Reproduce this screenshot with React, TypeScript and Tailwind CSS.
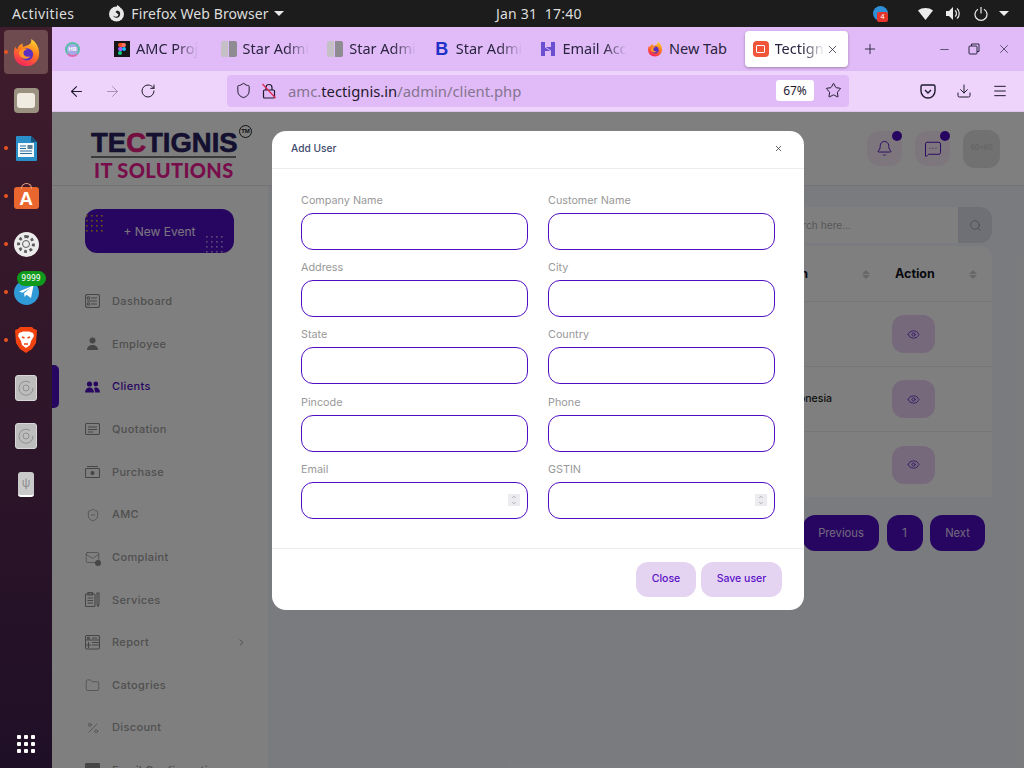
import React from 'react';
import {
  ArrowLeft, ArrowRight, RotateCw, Shield, Star, Download, Menu, Plus, X, Minus, Bell,
  MessageSquareMore, Eye, Search, ChevronRight, ChevronUp, ChevronDown, Folder, Percent, ShieldMinus,
  Mail,
} from 'lucide-react';

const FirefoxIcon = ({ size, id }: { size: number; id: string }) => (
  <svg width={size} height={size} viewBox="0 0 32 32">
    <defs>
      <linearGradient id={id} x1="0.7" y1="0" x2="0.3" y2="1">
        <stop offset="0" stopColor="#ffd22e" />
        <stop offset="0.45" stopColor="#ff7a1f" />
        <stop offset="1" stopColor="#f5215f" />
      </linearGradient>
    </defs>
    <path d="M16 31C7.7 31 2 24.6 2 17c0-3 .8-5.6 2-7.6.3 1.6 1 2.6 1.8 3.2C6.6 9 9 6.6 12 6c-.6 1.6-.3 2.8.4 3.6 2-.6 6-1.4 8-3.8.8-1.2 1-2.6.8-4.8 4 2.4 8.8 7.6 8.8 16C30 24.6 24.3 31 16 31z" fill={`url(#${id})`} />
    <circle cx="16.5" cy="18" r="6.8" fill="#5b2fc0" />
    <path d="M8 15c2-3.4 6.4-3.6 9-2.4-2.6.2-4.4 1.6-4.4 4 0 3.6 4.4 5.2 8 3.6-2 3-7 3.6-10 1.4C8 19.8 7.2 17 8 15z" fill="#ff9a2a" />
  </svg>
);

const DiscIcon = () => (
  <div className="w-[22px] h-[26px] rounded-[3px] bg-[#bdbdbd] border border-[#d8d8d8] flex items-center justify-center">
    <svg width="18" height="18" viewBox="0 0 18 18" fill="none" stroke="#8f8f8f" strokeWidth="1">
      <path d="M13 3.500a7 7 0 1 0 3 5.500" />
      <circle cx="9" cy="9" r="3" />
    </svg>
  </div>
);

const dockApps: { icon: React.ReactNode; running?: boolean; active?: boolean }[] = [
  { icon: <FirefoxIcon size={29} id="dock-fx" />, running: true, active: true },
  {
    icon: (
      <div className="w-[25px] h-[25px] rounded-[4px] bg-[#9a9180] flex items-center justify-center">
        <div className="w-[18px] h-[15px] rounded-[3px] bg-[#f1ece2]" />
      </div>
    ),
  },
  {
    running: true,
    icon: (
      <svg width="22" height="25" viewBox="0 0 22 25">
        <path d="M2 0h14l6 6v18a1 1 0 0 1-1 1H2a1 1 0 0 1-1-1V1a1 1 0 0 1 1-1z" fill="#2a8fc9" />
        <rect x="3" y="7" width="16" height="14" fill="#f3f8fb" />
        <path d="M5 10h6M5 12.500h6M5 15h12M5 17.500h12" stroke="#2a6f9c" strokeWidth="1" />
        <rect x="12.500" y="9" width="5" height="4" fill="#5a7f96" />
        <path d="M16 0l6 6h-6z" fill="#16527a" />
      </svg>
    ),
  },
  {
    running: true,
    icon: (
      <div className="relative w-[25px] h-[22px] mt-[4px] rounded-[3px] bg-[#e9662f] flex items-center justify-center text-white font-bold text-[19px] leading-none font-['Liberation_Sans',sans-serif]">
        <span className="absolute -top-[4px] left-[7px] w-[11px] h-[6px] rounded-t-full border border-b-0 border-[#e9a080]" />
        A
      </div>
    ),
  },
  {
    running: true,
    icon: (
      <div className="w-[25px] h-[25px] rounded-full bg-[#ececec] flex items-center justify-center">
        <div className="w-[18px] h-[18px] rounded-full border-[3px] border-dotted border-[#5c5c5c] flex items-center justify-center">
          <div className="w-[8px] h-[8px] rounded-full border border-[#5c5c5c]" />
        </div>
      </div>
    ),
  },
  {
    running: true,
    icon: (
      <div className="relative w-[25px] h-[25px] rounded-full bg-[#2f9ad6] flex items-center justify-center">
        <svg width="15" height="14" viewBox="0 0 15 14">
          <path d="M0 6.500 14.500.5 12 13 7.500 9.800 5.600 12l-.5-3.800 6.600-5.400L3.600 7.800z" fill="#fff" />
        </svg>
        <span className="absolute left-[3px] top-[-9px] w-[29px] h-[15px] rounded-full bg-[#0f9a1e] text-white text-[8px] leading-[15px] text-center font-['DejaVu_Sans_Mono',monospace]">
          9999
        </span>
      </div>
    ),
  },
  {
    running: true,
    icon: (
      <svg width="24" height="28" viewBox="0 0 24 28">
        <path d="M6 1h12l2 2 3 1-1 13-4 6-6 4-6-4-4-6L1 4l3-1z" fill="#f1420f" />
        <path d="M5 7l4-1.500h6L19 7l1 3-3 5-1 4-4 3-4-3-1-4-3-5z" fill="#fff" />
        <path d="M8 11l2.500 1M16 11l-2.500 1M10 18h4" stroke="#f1420f" strokeWidth="1.500" fill="none" />
      </svg>
    ),
  },
  { icon: <DiscIcon /> },
  { icon: <DiscIcon /> },
  {
    icon: (
      <div className="w-[16px] h-[25px] rounded-[3px] bg-[#c9c9c9] border-b-2 border-white flex items-center justify-center text-[#8a8a8a] text-[11px]">
        ψ
      </div>
    ),
  },
];

const Dock = () => (
  <div className="w-[52px] shrink-0 flex flex-col pt-px pb-[15px] bg-gradient-to-b from-[#401c2c] to-[#1f0f26]">
    {dockApps.map((app, i) => (
      <div key={i} className="relative h-[48px] flex items-center justify-center">
        {app.running && <span className="absolute left-[4px] top-[22px] w-[4px] h-[4px] rounded-full bg-[#e95420]" />}
        {app.active ? (
          <div className="w-[44px] h-[44px] rounded-[4px] bg-[#6d4b4f] flex items-center justify-center">{app.icon}</div>
        ) : (
          app.icon
        )}
      </div>
    ))}
    <div className="mt-auto mx-auto grid grid-cols-3 gap-x-[3px] gap-y-[3px] w-[18px]">
      {Array.from({ length: 9 }).map((_, i) => (
        <span key={i} className="w-[4px] h-[4px] rounded-[1px] bg-white" />
      ))}
    </div>
  </div>
);

const TopBar = () => (
  <div className="h-[27px] shrink-0 bg-[#1c1c1c] text-[#dedede] text-[14px] flex items-center font-['Noto_Sans',sans-serif] relative">
    <span className="ml-[12px] tracking-[0.4px]">Activities</span>
    <svg className="ml-[34px]" width="17" height="17" viewBox="0 0 17 17">
      <circle cx="8.500" cy="9" r="7.500" fill="#e8e8e8" />
      <path d="M5 8.500a3.600 3.600 0 1 0 4-3l-1.500 1.500 3 2.500a2.500 2.500 0 1 1-5.500-1z" fill="#1c1c1c" />
      <path d="M9 0c2 1 3 2 3.400 3.600L9 3z" fill="#e8e8e8" />
    </svg>
    <span className="ml-[6px] tracking-[0.1px]">Firefox Web Browser</span>
    <span className="ml-[5px] w-0 h-0 border-x-[5px] border-x-transparent border-t-[5px] border-t-[#e8e8e8]" />
    <span className="absolute left-[496px] tracking-[0.2px]">Jan 31&nbsp;&nbsp;17:40</span>
    <div className="ml-auto flex items-center pr-[15px]">
      <div className="relative w-[15px] h-[15px] rounded-full bg-[#2d8fd8]">
        <span className="absolute left-[4px] top-[6px] w-[11px] h-[10px] rounded-[2px] bg-[#e5352b] text-white text-[7px] leading-[10px] text-center">4</span>
      </div>
      <svg className="ml-[30px]" width="15" height="12" viewBox="0 0 15 12">
        <path d="M0 2.500C4-.8 11-.8 15 2.500L7.500 12z" fill="#ececec" />
      </svg>
      <svg className="ml-[13px]" width="14" height="13" viewBox="0 0 14 13" fill="#ececec">
        <path d="M0 4h3l4-4v13L3 9H0z" />
        <path d="M9 3.500c2 1.500 2 4.500 0 6M11 1.500c3 2.500 3 7.500 0 10" fill="none" stroke="#ececec" strokeWidth="1.200" />
      </svg>
      <svg className="ml-[14px]" width="14" height="14" viewBox="0 0 14 14" fill="none" stroke="#ececec" strokeWidth="1.200">
        <path d="M4 2.200a6 6 0 1 0 6 0M7 0v6.500" />
      </svg>
      <span className="ml-[11px] w-0 h-0 border-x-[5px] border-x-transparent border-t-[5px] border-t-[#ececec]" />
    </div>
  </div>
);

interface BrowserTab {
  title: string;
  icon: React.ReactNode;
  fade?: boolean;
}

const StarIcon = () => (
  <div className="w-[16px] h-[16px] flex gap-px">
    <span className="w-[7px] bg-[#c4c0c6] rounded-l-[2px]" />
    <span className="w-[8px] bg-[#8f8b92] rounded-r-[2px]" />
  </div>
);

const tabs: BrowserTab[] = [
  {
    title: 'AMC Proj',
    fade: true,
    icon: (
      <div className="w-[16px] h-[16px] bg-[#161616] flex flex-col items-center justify-center">
        <div className="grid grid-cols-2 w-[8px]">
          <span className="h-[4px] bg-[#f24e1e] rounded-l-full" />
          <span className="h-[4px] bg-[#ff7262] rounded-r-full" />
          <span className="h-[4px] bg-[#a259ff] rounded-l-full" />
          <span className="h-[4px] bg-[#1abcfe] rounded-full" />
          <span className="h-[4px] bg-[#0acf83] rounded-full" />
        </div>
      </div>
    ),
  },
  { title: 'Star Admi', fade: true, icon: <StarIcon /> },
  { title: 'Star Admi', fade: true, icon: <StarIcon /> },
  {
    title: 'Star Admi',
    fade: true,
    icon: <span className="w-[16px] text-center text-[#2030c8] text-[18px] font-bold leading-none font-['Liberation_Sans',sans-serif]">B</span>,
  },
  {
    title: 'Email Acc',
    fade: true,
    icon: (
      <svg width="16" height="16" viewBox="0 0 16 16" fill="#6a4fd0">
        <path d="M1 1h4v5h6V1h4v14h-4v-5H5v5H1z" />
        <path d="M5 6l6 4" stroke="#e1bbf7" strokeWidth="1" />
      </svg>
    ),
  },
  { title: 'New Tab', icon: <FirefoxIcon size={16} id="tab-fx" /> },
];

const TabBar = () => (
  <div className="h-[44px] shrink-0 bg-[#e1bbf7] flex items-center font-['Noto_Sans',sans-serif] text-[14.500px] text-[#2a2440]">
    <div className="w-[60px] flex pl-[13px] shrink-0">
      <div className="w-[15px] h-[15px] rounded-full border-[2px] border-[#58c0a8] border-b-[#e06ab0] text-[6px] font-bold leading-[11px] text-center text-white bg-[#a9a8e8]">
        HR
      </div>
    </div>
    {tabs.map((tab, i) => (
      <div key={i} className="w-[106.600px] shrink-0 flex items-center pl-[2px] gap-[6px]">
        <div className="w-[16px] h-[16px] shrink-0 flex items-center justify-center">{tab.icon}</div>
        <span className={`whitespace-nowrap ${tab.fade ? '[mask-image:linear-gradient(to_right,black_65%,transparent)]' : ''}`}>
          {tab.title}
        </span>
      </div>
    ))}
    <div className="w-[103px] h-[36px] -ml-[7px] shrink-0 bg-white rounded-[4px] shadow-[0_1px_3px_rgba(0,0,0,0.3)] flex items-center pl-[8px]">
      <div className="w-[16px] h-[16px] rounded-[4px] bg-[#f0553a] flex items-center justify-center">
        <div className="w-[9px] h-[8px] rounded-[1px] border border-white" />
      </div>
      <span className="ml-[6px] w-[50px] whitespace-nowrap [mask-image:linear-gradient(to_right,black_55%,transparent)]">Tectign</span>
      <X size={13} strokeWidth={1.4} className="ml-[1px]" />
    </div>
    <Plus size={16} strokeWidth={1.4} className="ml-[14px]" />
    <div className="ml-auto flex items-center pr-[13px] gap-[17px]">
      <Minus size={13} strokeWidth={1.3} />
      <svg width="12" height="12" viewBox="0 0 12 12" fill="none" stroke="#2a2440" strokeWidth="1">
        <rect x="1" y="3" width="8" height="8" rx="1" />
        <path d="M3.500 3V1h7.500v7.500H9" />
      </svg>
      <X size={14} strokeWidth={1.2} />
    </div>
  </div>
);

const NavBar = () => (
  <div className="h-[41px] shrink-0 bg-[#eed4fb] border-b border-[#dcc4ea] flex items-center text-[#1f1a2e] font-['Noto_Sans',sans-serif]">
    <ArrowLeft size={17} strokeWidth={1.5} className="ml-[16px]" />
    <ArrowRight size={17} strokeWidth={1.3} className="ml-[19px] text-[#9d8bac]" />
    <RotateCw size={16} strokeWidth={1.5} className="ml-[19px]" />
    <div className="ml-[71px] w-[622px] h-[32px] mb-px rounded-[4px] bg-[#e1bbf7] flex items-center pl-[8px]">
      <Shield size={17} strokeWidth={1.4} />
      <svg className="ml-[10px]" width="14" height="16" viewBox="0 0 14 16" fill="none" stroke="#1f1a2e" strokeWidth="1.200">
        <rect x="1.500" y="7" width="11" height="8" rx="1" />
        <path d="M4 7V4.500a3 3 0 0 1 6 0V7" />
        <path d="M0.500 1 13.500 15" stroke="#e0254e" />
      </svg>
      <span className="ml-[12px] text-[14.800px] leading-[32px] pt-px text-[#84758f]">
        amc.<span className="text-[#1f1a2e]">tectignis.in</span>/admin/client.php
      </span>
      <span className="ml-auto w-[38px] h-[21px] bg-white rounded-[3px] text-[12px] leading-[21px] text-center">67%</span>
      <Star size={17} strokeWidth={1.4} className="ml-[11px] mr-[7px]" />
    </div>
    <svg className="ml-[71px]" width="16" height="15" viewBox="0 0 16 15" fill="none" stroke="#1f1a2e" strokeWidth="1.400">
      <path d="M2.500 1h11A1.500 1.500 0 0 1 15 2.500V7a7 7 0 0 1-14 0V2.500A1.500 1.500 0 0 1 2.500 1z" />
      <path d="M5 6l3 3 3-3" />
    </svg>
    <Download size={16} strokeWidth={1.5} className="ml-[20px]" />
    <Menu size={16} strokeWidth={1.5} className="ml-[20px]" />
  </div>
);

const iconStroke = { fill: 'none', stroke: 'currentColor', strokeWidth: 1.1 };

const navItems: { label: string; icon: React.ReactNode; active?: boolean; chevron?: boolean }[] = [
  {
    label: 'Dashboard',
    icon: (
      <svg width="15" height="14" viewBox="0 0 15 14" {...iconStroke}>
        <rect x="0.500" y="0.500" width="14" height="13" rx="2" />
        <circle cx="3.500" cy="4" r="1.200" />
        <circle cx="3.500" cy="10" r="1.200" />
        <path d="M6 4h6M2 7h10M6 10h6" />
      </svg>
    ),
  },
  {
    label: 'Employee',
    icon: (
      <svg width="15" height="14" viewBox="0 0 15 14" fill="currentColor">
        <circle cx="7.500" cy="3.500" r="3" />
        <path d="M2 13c0-3.500 2.500-5 5.500-5s5.500 1.500 5.500 5z" />
      </svg>
    ),
  },
  {
    label: 'Clients',
    active: true,
    icon: (
      <svg width="15" height="12" viewBox="0 0 15 12" fill="currentColor">
        <circle cx="4.500" cy="3" r="2.600" />
        <circle cx="10.800" cy="3" r="2.400" />
        <path d="M0 11.500c0-3 2-5 4.500-5s4.500 2 4.500 5z" />
        <path d="M10 11.500h5c0-3-1.800-5-4-5-.8 0-1.500.2-2 .6 .7 1.200 1 2.700 1 4.400z" />
      </svg>
    ),
  },
  {
    label: 'Quotation',
    icon: (
      <svg width="15" height="12" viewBox="0 0 15 12" {...iconStroke}>
        <rect x="0.500" y="0.500" width="14" height="11" rx="1.500" />
        <path d="M3 4h9M3 6.500h9M3 9h5" />
      </svg>
    ),
  },
  {
    label: 'Purchase',
    icon: (
      <svg width="15" height="12" viewBox="0 0 15 12" {...iconStroke}>
        <rect x="0.500" y="2.500" width="14" height="9" rx="1" />
        <path d="M2 0.500h11" />
        <circle cx="7.500" cy="7" r="1.500" fill="currentColor" />
      </svg>
    ),
  },
  { label: 'AMC', icon: <ShieldMinus size={14} strokeWidth={1.2} /> },
  {
    label: 'Complaint',
    icon: (
      <div className="relative">
        <Mail size={15} strokeWidth={1.1} />
        <span className="absolute right-[-1px] bottom-[-1px] w-[6px] h-[6px] rounded-full bg-current" />
      </div>
    ),
  },
  {
    label: 'Services',
    icon: (
      <svg width="15" height="15" viewBox="0 0 15 15" {...iconStroke}>
        <rect x="0.500" y="2" width="9.500" height="12.500" rx="1" />
        <rect x="3" y="0.500" width="4.500" height="2.500" />
        <path d="M2.500 6h5.500M2.500 8.500h5.500M2.500 11h5.500" />
        <path d="M12 1h2v11l-1 2.500-1-2.500z" />
      </svg>
    ),
  },
  {
    label: 'Report',
    chevron: true,
    icon: (
      <svg width="15" height="15" viewBox="0 0 15 15" {...iconStroke}>
        <rect x="0.500" y="0.500" width="14" height="13.500" rx="1.500" />
        <path d="M1 5h13M7 3h5M7 7.500h7M7 10h7M1 10h5M3.500 7v6" />
        <circle cx="3.500" cy="3" r="1" />
      </svg>
    ),
  },
  { label: 'Catogries', icon: <Folder size={15} strokeWidth={1.1} /> },
  { label: 'Discount', icon: <Percent size={14} strokeWidth={1.2} /> },
  {
    label: 'Email Configuration',
    icon: (
      <svg width="15" height="14" viewBox="0 0 15 14" fill="currentColor">
        <rect x="0" y="0" width="15" height="14" rx="1" />
      </svg>
    ),
  },
];

const Logo = () => (
  <div className="relative h-[74px] border-b border-[#e8e8e8] pl-[39px] pt-[19px] font-['Liberation_Sans',sans-serif] font-bold">
    <div className="text-[27.500px] leading-[24px] w-[146px] text-[#282060] whitespace-nowrap [-webkit-text-stroke:0.6px_#282060]">
      TE<span className="text-[#e81a80] [-webkit-text-stroke:0.6px_#e81a80]">C</span>TIGNIS
    </div>
    <div className="h-[2px] w-[145px] mt-[1px] bg-[#777]" />
    <div className="text-[20px] leading-[20px] mt-[2px] ml-[3px] tracking-[0.350px] text-[#f01a96] font-['Lato',sans-serif] font-black">
      IT SOLUTIONS
    </div>
    <div className="absolute left-[187px] top-[13px] w-[13px] h-[13px] rounded-full border border-[#222] text-[6px] leading-[11px] text-center text-[#222]">
      TM
    </div>
  </div>
);

const DotPattern = ({ color, className }: { color: string; className: string }) => (
  <svg className={className} width="17" height="17" viewBox="0 0 17 17" fill={color}>
    {[0, 5, 10, 15].map((y) => [0, 5, 10, 15].map((x) => <rect key={`${x}-${y}`} x={x} y={y} width="1.600" height="1.600" />))}
  </svg>
);

const Sidebar = () => (
  <aside className="w-[216px] shrink-0 bg-white h-full">
    <Logo />
    <div className="relative mt-[23px] ml-[33px] w-[149px] h-[44px] rounded-[12px] bg-[#4f0dc4] text-[#f3e8ff] text-[12px] pt-px flex items-center justify-center">
      <DotPattern color="#d9a520" className="absolute left-[1px] top-[6px]" />
      <DotPattern color="#b79be8" className="absolute right-[11px] bottom-0" />
      + New Event
    </div>
    <nav className="mt-[27px]">
      {navItems.map((item) => (
        <div
          key={item.label}
          className={`relative h-[42.650px] flex items-center pl-[33px] ${item.active ? 'text-[#4f0dc4]' : 'text-[#a0a0a0]'}`}
        >
          {item.active && <span className="absolute left-0 top-0 w-[7px] h-[43px] rounded-r-[5px] bg-[#4f0dc4]" />}
          <span className={`w-[15px] flex justify-center ${item.active ? '' : 'text-[#8c8c8c]'}`}>{item.icon}</span>
          <span className="ml-[12px] text-[11px] font-medium tracking-[0.35px]">{item.label}</span>
          {item.chevron && <ChevronRight size={11} className="ml-auto mr-[21px] text-[#8c8c8c]" />}
        </div>
      ))}
    </nav>
  </aside>
);

const SortIcon = () => (
  <span className="flex flex-col gap-[1px]">
    <span className="w-0 h-0 border-x-[4px] border-x-transparent border-b-[4px] border-b-[#cfcfcf]" />
    <span className="w-0 h-0 border-x-[4px] border-x-transparent border-t-[4px] border-t-[#cfcfcf]" />
  </span>
);

const tableRows = ['', 'Jakarta, Indonesia', ''];

const PageContent = () => (
  <main className="flex-1 min-w-0 flex flex-col bg-[#f4f7fc]">
    <header className="h-[74px] shrink-0 bg-white border-b border-[#e8e8e8] flex items-center justify-end gap-[13px] pr-[24px]">
      {[<Bell key="b" size={17} strokeWidth={1.3} />, <MessageSquareMore key="m" size={18} strokeWidth={1.3} />].map((icon, i) => (
        <div key={i} className="relative w-[35px] h-[35px] rounded-[12px] bg-[#fcedfa] text-[#4f0dc4] flex items-center justify-center">
          {icon}
          <span className="absolute right-0 top-0 w-[10px] h-[10px] rounded-full bg-[#4f0dc4]" />
        </div>
      ))}
      <div className="w-[37px] h-[38px] rounded-[12px] bg-[#e2e2e2] flex items-center justify-center text-[7px] text-[#c4c4c4]">60x60</div>
    </header>

    <div className="mt-[21px] h-[36px] shrink-0 flex justify-end pr-[32px]">
      <div className="w-[188px] h-full bg-white flex items-center pl-[14px] pt-px text-[10.200px] text-[#b0b0b0]">Search here...</div>
      <div className="w-[34px] h-full bg-[#dde0ea] rounded-r-[12px] flex items-center justify-center text-[#8a8a98]">
        <Search size={13} strokeWidth={1.3} />
      </div>
    </div>

    <div className="mt-[3px] ml-[32px] mr-[32px] rounded-t-[12px] bg-white">
      <div className="h-[56px] pt-px border-b border-[#eee] flex items-center text-[12.500px] font-bold text-[#14141e]">
        <div className="flex-1 flex items-center justify-end">
          <span className="mr-[54px]">Location</span>
          <SortIcon />
        </div>
        <div className="w-[122px] shrink-0 flex items-center pl-[25px]">
          <span>Action</span>
          <span className="ml-[34px]">
            <SortIcon />
          </span>
        </div>
      </div>
      {tableRows.map((place, i) => (
        <div key={i} className="h-[65px] border-b border-[#eee] last:border-b-0 flex items-center text-[10.500px] font-medium text-[#222]">
          <div className="flex-1 flex justify-end pr-[38px]">{place}</div>
          <div className="w-[122px] shrink-0 pl-[22px]">
            <div className="w-[43px] h-[38px] rounded-[12px] bg-[#ecd2f6] text-[#4f0dc4] flex items-center justify-center">
              <Eye size={13} strokeWidth={1.3} />
            </div>
          </div>
        </div>
      ))}
    </div>

    <div className="mt-[18px] flex justify-end items-center gap-[7.500px] pr-[39px] text-[11.200px] text-[#e4d4f8]">
      <span className="w-[76px] h-[36px] rounded-[12px] bg-[#4f0dc4] flex items-center justify-center">Previous</span>
      <span className="w-[36px] h-[36px] rounded-[12px] bg-[#4f0dc4] flex items-center justify-center">1</span>
      <span className="w-[55px] h-[36px] rounded-[12px] bg-[#4f0dc4] flex items-center justify-center">Next</span>
    </div>
  </main>
);

const fields: { label: string; spinner?: boolean }[] = [
  { label: 'Company Name' },
  { label: 'Customer Name' },
  { label: 'Address' },
  { label: 'City' },
  { label: 'State' },
  { label: 'Country' },
  { label: 'Pincode' },
  { label: 'Phone' },
  { label: 'Email', spinner: true },
  { label: 'GSTIN', spinner: true },
];

const AddUserModal = () => (
  <div className="absolute inset-0 bg-black/50 flex justify-center pt-[19px]">
    <div className="w-[532px] h-[479px] bg-white rounded-[14px] flex flex-col">
      <div className="h-[38px] shrink-0 border-b border-[#ececec] flex items-center justify-between pb-[2px] pl-[19px] pr-[21px]">
        <span className="text-[10.200px] font-medium text-[#3e4a6b]">Add User</span>
        <X size={9} strokeWidth={2} className="text-[#333]" />
      </div>
      <div className="grid grid-cols-2 gap-x-[20px] gap-y-[9.200px] pl-[29px] pr-[29px] pt-[23px] pb-[29px] border-b border-[#ececec]">
        {fields.map((field) => (
          <div key={field.label}>
            <label className="block h-[18px] leading-[18px] mb-[3px] text-[10.800px] text-[#999]">{field.label}</label>
            <div className="relative">
              <input className="block w-full h-[37px] rounded-[12px] border border-[#4f0dc4] bg-white outline-none" />
              {field.spinner && (
                <span className="absolute right-[8px] top-[12px] w-[12px] h-[12px] bg-[#ececf0] flex flex-col items-center justify-center text-[#777]">
                  <ChevronUp size={6} strokeWidth={2} />
                  <ChevronDown size={6} strokeWidth={2} />
                </span>
              )}
            </div>
          </div>
        ))}
      </div>
      <div className="flex justify-end gap-[5px] pt-[13px] pr-[22px] text-[10.500px] font-medium text-[#5a12c8]">
        <button className="w-[60px] h-[35px] rounded-[12px] bg-[#e5d4f1]">Close</button>
        <button className="w-[81px] h-[35px] rounded-[12px] bg-[#e5d4f1]">Save user</button>
      </div>
    </div>
  </div>
);

export default function App() {
  return (
    <div className="w-[1024px] h-[768px] overflow-hidden flex flex-col font-['Inter',sans-serif]">
      <TopBar />
      <div className="flex-1 min-h-0 flex">
        <Dock />
        <div className="flex-1 min-w-0 flex flex-col">
          <TabBar />
          <NavBar />
          <div className="relative flex-1 min-h-0 flex overflow-hidden">
            <Sidebar />
            <PageContent />
            <AddUserModal />
          </div>
        </div>
      </div>
    </div>
  );
}
